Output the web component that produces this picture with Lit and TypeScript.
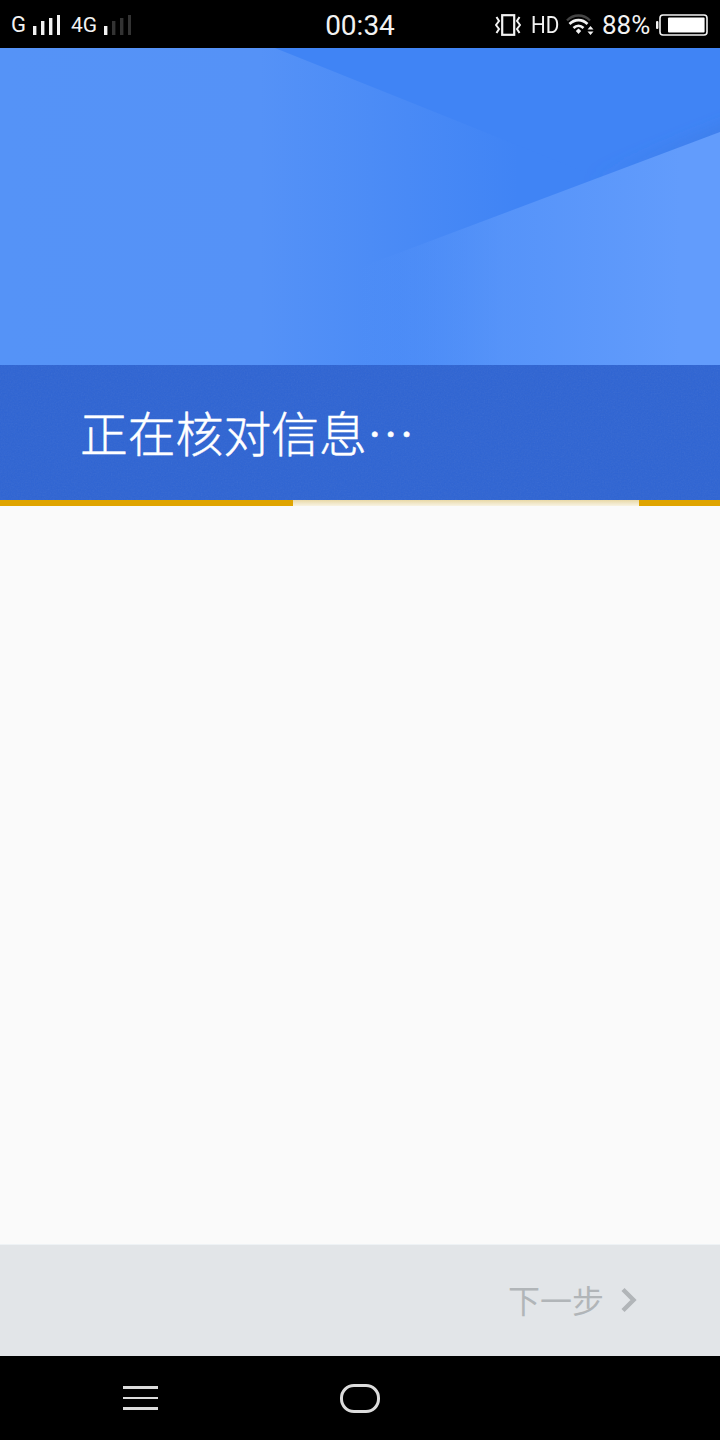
import { LitElement, html, css, svg } from "lit";
import { customElement } from "lit/decorators.js";

const bars = (lit: number) => {
  const tops = [11, 6, 3, 0];
  return html`<svg class="bars" width="27" height="20" viewBox="0 0 27 20">
    ${tops.map(
      (t, i) => svg`<rect x=${i * 8} y=${t} width="3.4" height=${20 - t} fill=${i < lit ? "#f2f2f2" : "#333"}></rect>`
    )}
  </svg>`;
};

@customElement("app-root")
export class AppRoot extends LitElement {
  static styles = css`
    :host {
      display: flex;
      flex-direction: column;
      width: 720px;
      height: 1440px;
      background: #fafafa;
      font-family: "Noto Sans CJK SC", "Liberation Sans", sans-serif;
    }
    .status {
      flex: none;
      height: 48px;
      background: #000;
      color: #f2f2f2;
      display: grid;
      grid-template-columns: 1fr auto 1fr;
      align-items: center;
      font-family: Roboto, "Liberation Sans", sans-serif;
    }
    .left {
      display: flex;
      align-items: center;
      padding-left: 11px;
      font-size: 22px;
      height: 48px;
    }
    .left span { width: 22px; line-height: 48px; margin-top: -1px; }
    .left .four { width: 33px; margin-left: 11px; font-size: 21px; }
    .bars { display: block; }
    .time { font-size: 28px; line-height: 48px; margin-top: 2px; }
    .right {
      display: flex;
      align-items: center;
      justify-content: flex-end;
      padding-right: 12px;
      height: 48px;
    }
    .right svg { display: block; flex: none; }
    .hd { font-size: 23.5px; margin-left: 10px; transform: scaleX(0.88); transform-origin: left; width: 28px; }
    .wifi { margin-left: 7px; }
    .pct { font-size: 26px; margin-left: 7px; width: 50px; }
    .batt { margin-left: 4px; }
    .hero { flex: none; height: 317px; }
    .hero svg { display: block; }
    .band {
      flex: none;
      position: relative;
      height: 135px;
      background: #2e64d3;
      display: flex;
      align-items: center;
      padding-left: 80px;
      overflow: hidden;
    }
    .noise { position: absolute; inset: 0; opacity: 0.08; }
    .title {
      position: relative;
      color: #fff;
      font-size: 47.8px;
      line-height: 135px;
      margin-top: -3px;
      font-weight: 300;
      -webkit-text-stroke: 0.5px #fff;
      white-space: nowrap;
    }
    .progress { flex: none; height: 6px; display: flex; background: #dfa400; }
    .progress .a { width: 293px; }
    .progress .b {
      width: 346px;
      background: linear-gradient(180deg, #e8d8a6 0%, #f0e6c6 50%, #f8f3e2 100%);
    }
    .content { flex: 1; background: #fafafa; }
    .footer {
      flex: none;
      height: 112px;
      box-sizing: border-box;
      background: #e2e5e8;
      border-top: 1px solid #eef2f5;
      display: flex;
      align-items: center;
      justify-content: flex-end;
      padding-right: 83px;
      color: #b1b5b8;
    }
    .next { font-size: 32px; line-height: 112px; margin-top: -4px; }
    .chev { display: block; margin-left: 16px; margin-top: -2px; }
    .nav {
      flex: none;
      height: 84px;
      background: #000;
      display: flex;
      align-items: center;
      gap: 182px;
      padding-left: 123px;
    }
    .menu { display: flex; flex-direction: column; gap: 8px; width: 35px; }
    .menu i { display: block; height: 2.4px; background: #dcdcdc; }
    .home {
      width: 40px;
      height: 29px;
      box-sizing: border-box;
      border: 3px solid #dcdcdc;
      border-radius: 14px;
    }
  `;

  render() {
    return html`
      <div class="status">
        <div class="left">
          <span>G</span>${bars(4)}
          <span class="four">4G</span>${bars(1)}
        </div>
        <div class="time">00:34</div>
        <div class="right">
          <svg width="26" height="22" viewBox="0 0 26 22" fill="none" stroke="#f2f2f2">
            <rect x="7.2" y="1.2" width="12" height="19.6" stroke-width="2.2"></rect>
            <path d="M1.5 3 L4 7 L1 11 L4 15 L1.5 19 M24.5 3 L22 7 L25 11 L22 15 L24.5 19" stroke-width="2"></path>
          </svg>
          <span class="hd">HD</span>
          <svg class="wifi" width="29" height="24" viewBox="0 0 29 24">
            <path d="M1 7.5 C7.5 0.8 17.5 0.8 24 7.5" fill="none" stroke="#444" stroke-width="2.4"></path>
            <path d="M3.5 11 C8.5 5.8 16.5 5.8 21.5 11" fill="none" stroke="#f2f2f2" stroke-width="2.6"></path>
            <path d="M7.5 15 C10.5 12 14.5 12 17.5 15" fill="none" stroke="#f2f2f2" stroke-width="2.6"></path>
            <path d="M9.8 18 L12.5 15.4 L15.2 18 L12.5 21 Z" fill="#f2f2f2"></path>
            <path d="M24.5 13 L27.5 16.5 H21.5 Z M24.5 22 L27.5 18.5 H21.5 Z" fill="#f2f2f2"></path>
          </svg>
          <span class="pct">88%</span>
          <svg class="batt" width="52" height="22" viewBox="0 0 52 22">
            <rect x="0" y="7" width="2.4" height="8" rx="1" fill="#f2f2f2"></rect>
            <rect x="4" y="1" width="47" height="20" rx="3" fill="none" stroke="#f2f2f2" stroke-width="1.6"></rect>
            <rect x="12" y="3.6" width="36.6" height="14.8" rx="1" fill="#fff"></rect>
          </svg>
        </div>
      </div>

      <div class="hero">
        <svg width="720" height="317" viewBox="0 0 720 317">
          <defs>
            <linearGradient id="base" gradientUnits="userSpaceOnUse" x1="0" y1="0" x2="720" y2="0">
              <stop offset="0" stop-color="#5593f7"></stop>
              <stop offset="0.36" stop-color="#5592f7"></stop>
              <stop offset="0.72" stop-color="#4084f5"></stop>
              <stop offset="1" stop-color="#4084f5"></stop>
            </linearGradient>
            <linearGradient id="light" gradientUnits="userSpaceOnUse" x1="360" y1="0" x2="680" y2="0">
              <stop offset="0" stop-color="#629cfc" stop-opacity="0"></stop>
              <stop offset="0.12" stop-color="#5f9afb" stop-opacity="0.1"></stop>
              <stop offset="0.45" stop-color="#5f9afb" stop-opacity="0.7"></stop>
              <stop offset="1" stop-color="#629cfc"></stop>
            </linearGradient>
            <linearGradient id="shade" gradientUnits="userSpaceOnUse" x1="590" y1="0" x2="720" y2="0">
              <stop offset="0" stop-color="#3d78de" stop-opacity="0"></stop>
              <stop offset="1" stop-color="#3d78de" stop-opacity="0.6"></stop>
            </linearGradient>
            <filter id="soft" filterUnits="userSpaceOnUse" x="540" y="20" width="240" height="170">
              <feGaussianBlur stdDeviation="7"></feGaussianBlur>
            </filter>
          </defs>
          <rect width="720" height="317" fill="url(#base)"></rect>
          <polygon points="275,0 720,0 720,178" fill="#4084f5"></polygon>
          <line x1="760" y1="69" x2="590" y2="133" stroke="url(#shade)" stroke-width="10" filter="url(#soft)"></line>
          <polygon points="720,84 340,227 340,317 720,317" fill="url(#light)"></polygon>
        </svg>
      </div>

      <div class="band">
        <svg class="noise" width="720" height="135">
          <filter id="n"><feTurbulence type="fractalNoise" baseFrequency="0.7" numOctaves="2"></feTurbulence><feColorMatrix type="saturate" values="0"></feColorMatrix></filter>
          <rect width="720" height="135" filter="url(#n)"></rect>
        </svg>
        <div class="title">正在核对信息…</div>
      </div>
      <div class="progress"><div class="a"></div><div class="b"></div></div>

      <div class="content"></div>

      <div class="footer">
        <span class="next">下一步</span>
        <svg class="chev" width="17" height="26" viewBox="0 0 17 26" fill="none">
          <path d="M3 2.5 L13.5 13 L3 23.5" stroke="#b1b5b8" stroke-width="4.4"></path>
        </svg>
      </div>

      <div class="nav">
        <div class="menu"><i></i><i></i><i></i></div>
        <div class="home"></div>
      </div>
    `;
  }
}
